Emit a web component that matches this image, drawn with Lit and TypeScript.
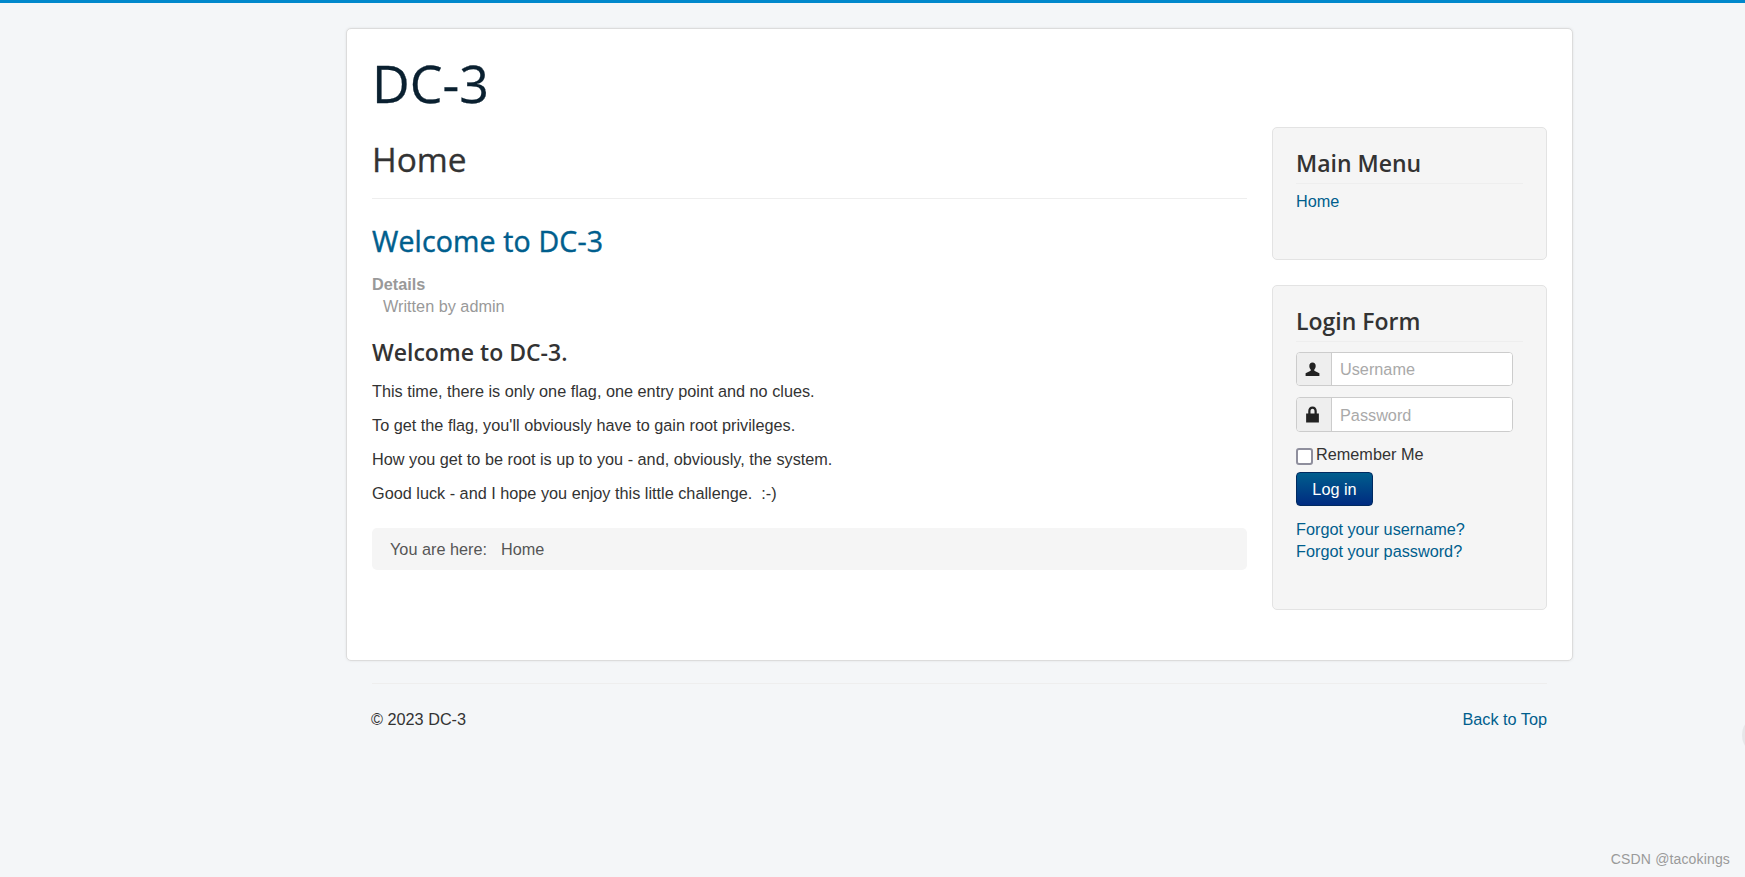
import { LitElement, html, css } from "lit";
import { customElement } from "lit/decorators.js";

@customElement("app-root")
export class AppRoot extends LitElement {
  static styles = css`
    :host { display: block; min-height: 877px; background: #f4f6f8; border-top: 3px solid #0088cc; box-sizing: border-box; position: relative; overflow: hidden;
      font-family: "Liberation Sans", Arial, sans-serif; font-size: 16.25px; line-height: 22px; color: #333; }
    a { color: #005e8d; text-decoration: none; }
    h1, h2, h3 { font-family: "Open Sans", sans-serif; margin: 0; }
    .wrap { width: 1227px; margin-left: 346px; }
    .card { box-sizing: border-box; height: 633px; margin-top: 25px; background: #fff; border: 1px solid #dcdcdc; border-radius: 5px; padding: 0 25px; box-shadow: 0 0 3px rgba(0,0,0,.08); }
    .brand { font-size: 52px; font-weight: 400; line-height: 68px; color: #0a2030; margin-top: 20px; height: 69px; -webkit-text-stroke: .3px #0a2030; }
    .cols { display: flex; gap: 25px; }
    .main { width: 875px; }
    .side { width: 275px; margin-top: 9px; display: flex; flex-direction: column; gap: 25px; }
    .page-h { font-size: 33.5px; font-weight: 400; line-height: 46px; margin-top: 18px; padding-bottom: 16px; border-bottom: 1px solid #eee; -webkit-text-stroke: .3px #333; }
    .title { font-size: 28.5px; font-weight: 400; line-height: 38px; margin-top: 23px; letter-spacing: .15px; color: #005e8d; -webkit-text-stroke: .45px #005e8d; }
    .meta { margin-top: 13px; color: #999; }
    .meta b { display: block; }
    .meta span { display: block; padding-left: 11px; }
    .lead { font-size: 23px; font-weight: 600; line-height: 32px; margin-top: 19px; }
    p { margin: 12px 0 0; }
    .crumb { height: 42px; margin-top: 24px; background: #f5f5f5; border-radius: 5px; display: flex; align-items: center; gap: 14px; padding-left: 18px; color: #555; }
    .panel { box-sizing: border-box; background: #f5f5f5; border: 1px solid #e3e3e3; border-radius: 5px; padding: 19px 23px 0; }
    .panel.menu { height: 133px; }
    .panel.login { height: 325px; }
    .panel h3 { font-size: 23px; font-weight: 600; line-height: 32px; padding-bottom: 4px; border-bottom: 1px solid #eee; }
    .menu a { display: block; margin-top: 6px; }
    .group { display: flex; width: 217px; height: 34px; box-sizing: border-box; border: 1px solid #ccc; border-radius: 4px; overflow: hidden; background: #fff; margin-top: 10px; }
    .group + .group { margin-top: 11px; height: 35px; }
    .addon { width: 35px; flex: none; background: #eee; border-right: 1px solid #ccc; display: flex; align-items: center; justify-content: center; box-sizing: border-box; padding-right: 3px; }
    .addon svg { width: 17px; height: 17px; fill: #222; display: block; }
    input.text { flex: 1; min-width: 0; border: 0; outline: 0; padding: 0 8px; font: inherit; background: #fff; }
    input.text::placeholder { color: #a9a9a9; opacity: 1; }
    .remember { display: flex; gap: 3px; margin-top: 11px; height: 24px; align-items: flex-start; }
    .box { width: 17px; height: 17px; box-sizing: border-box; border: 2px solid #8f8f9d; border-radius: 3px; background: #fff; margin-top: 5px; flex: none; }
    .btn { display: block; width: 77px; height: 34px; box-sizing: border-box; margin-top: 5px; border: 1px solid #002a60; border-radius: 4px; color: #fff; font: inherit; padding: 0; background: linear-gradient(#005e8d, #002b80); }
    .links { margin-top: 12px; }
    .links a { display: block; }
    .foot-rule { border-top: 1px solid #eee; margin: 22px 26px 0; }
    .foot { display: flex; justify-content: space-between; margin: 24px 26px 0 25px; }
    .mark { position: absolute; right: 15px; bottom: 8px; font-size: 14px; line-height: 20px; letter-spacing: .15px; color: #9a9a9a; }
    .edge { position: absolute; right: -9px; top: 720px; width: 12px; height: 24px; border-radius: 50%; background: #e6e7e9; }
  `;

  render() {
    return html`
      <div class="wrap">
        <div class="card">
          <h1 class="brand">DC-3</h1>
          <div class="cols">
            <div class="main">
              <h2 class="page-h">Home</h2>
              <h2 class="title"><a href="#">Welcome to DC-3</a></h2>
              <div class="meta"><b>Details</b><span>Written by admin</span></div>
              <h3 class="lead">Welcome to DC-3.</h3>
              <p>This time, there is only one flag, one entry point and no clues.</p>
              <p>To get the flag, you'll obviously have to gain root privileges.</p>
              <p>How you get to be root is up to you - and, obviously, the system.</p>
              <p>Good luck - and I hope you enjoy this little challenge.&nbsp; :-)</p>
              <div class="crumb"><span>You are here:</span><span>Home</span></div>
            </div>
            <div class="side">
              <div class="panel menu">
                <h3>Main Menu</h3>
                <a href="#">Home</a>
              </div>
              <div class="panel login">
                <h3>Login Form</h3>
                <div class="group">
                  <span class="addon"><svg viewBox="0 0 16 16"><path d="M8 1.500c-2 0-3 1.400-3 3.200 0 1.300.5 2.500 1.300 3.200v1.200L1.500 11.600V14h13v-2.400L9.700 9.100V7.900C10.500 7.200 11 6 11 4.700c0-1.800-1-3.200-3-3.200z"/></svg></span>
                  <input class="text" placeholder="Username" />
                </div>
                <div class="group">
                  <span class="addon"><svg viewBox="0 0 16 16"><path fill-rule="evenodd" d="M8 .5C5.500.5 4 2.300 4 4.700V7H2v8.500h12V7h-2V4.700C12 2.300 10.500.5 8 .5zm0 2.200c1.300 0 1.900.9 1.900 2.200V7H6.100V4.900C6.100 3.600 6.700 2.700 8 2.700z"/></svg></span>
                  <input class="text" placeholder="Password" />
                </div>
                <div class="remember"><span class="box"></span><span>Remember Me</span></div>
                <button class="btn">Log in</button>
                <div class="links"><a href="#">Forgot your username?</a><a href="#">Forgot your password?</a></div>
              </div>
            </div>
          </div>
        </div>
        <div class="foot-rule"></div>
        <div class="foot"><span>© 2023 DC-3</span><a href="#">Back to Top</a></div>
      </div>
      <div class="edge"></div>
      <div class="mark">CSDN @tacokings</div>
    `;
  }
}
